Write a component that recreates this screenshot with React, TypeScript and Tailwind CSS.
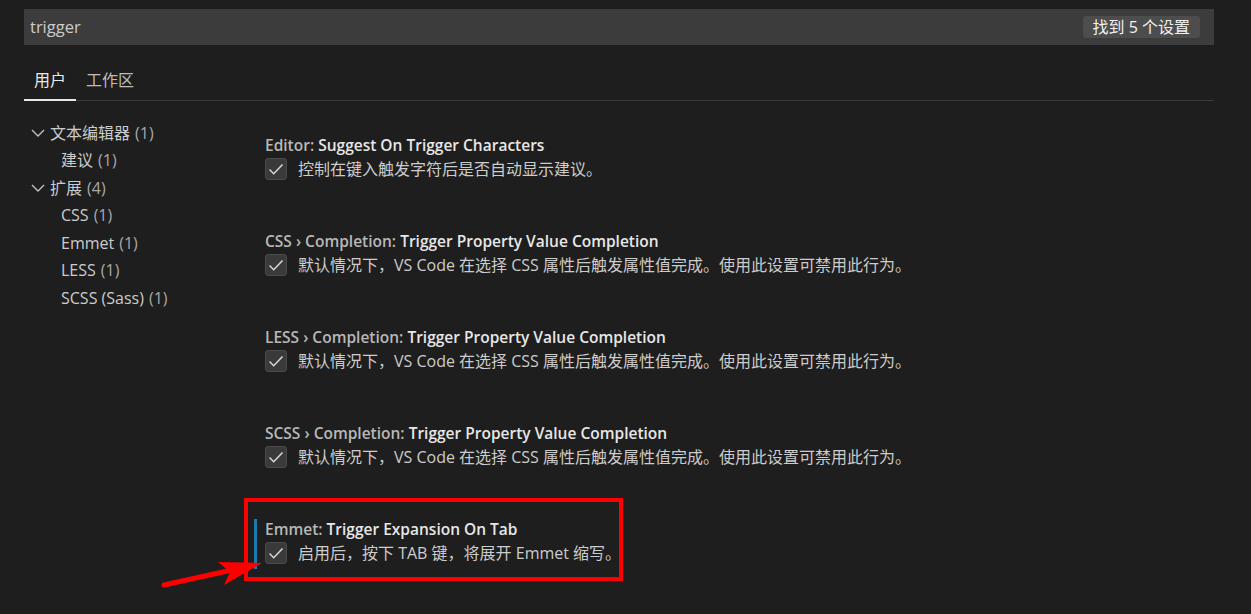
import { ReactNode } from 'react'

const FONT = { fontFamily: '"Open Sans", "Noto Sans CJK SC", sans-serif' }

type Setting = { prefix: string; name: string; desc: string; focused?: boolean }

const SETTINGS: Setting[] = [
  { prefix: 'Editor: ', name: 'Suggest On Trigger Characters', desc: '控制在键入触发字符后是否自动显示建议。' },
  {
    prefix: 'CSS › Completion: ',
    name: 'Trigger Property Value Completion',
    desc: '默认情况下，VS Code 在选择 CSS 属性后触发属性值完成。使用此设置可禁用此行为。',
  },
  {
    prefix: 'LESS › Completion: ',
    name: 'Trigger Property Value Completion',
    desc: '默认情况下，VS Code 在选择 CSS 属性后触发属性值完成。使用此设置可禁用此行为。',
  },
  {
    prefix: 'SCSS › Completion: ',
    name: 'Trigger Property Value Completion',
    desc: '默认情况下，VS Code 在选择 CSS 属性后触发属性值完成。使用此设置可禁用此行为。',
  },
  { prefix: 'Emmet: ', name: 'Trigger Expansion On Tab', desc: '启用后，按下 TAB 键，将展开 Emmet 缩写。', focused: true },
]

function Chevron() {
  return (
    <svg width="14" height="8" viewBox="0 0 14 8" fill="none" aria-hidden="true">
      <path d="M1 1l6 6 6-6" stroke="#c5c5c5" strokeWidth="1.3" />
    </svg>
  )
}

function TreeRow({ children, indent, open }: { children: ReactNode; indent?: boolean; open?: boolean }) {
  return (
    <div className={`flex h-[27.5px] items-center ${indent ? 'pl-[37px]' : 'pl-[7px]'}`}>
      {open && (
        <span className="mr-[5px] flex w-[14px] items-center">
          <Chevron />
        </span>
      )}
      {children}
    </div>
  )
}

function Count({ n }: { n: number }) {
  return <span className="ml-[5px] text-[#a8a8a8]">({n})</span>
}

function Checkbox() {
  return (
    <span className="flex h-[22px] w-[22px] shrink-0 items-center justify-center rounded-[3px] border border-[#4a4a4a] bg-[#3a3a3a]">
      <svg width="18" height="18" viewBox="0 0 18 18" fill="none" aria-hidden="true">
        <path d="M2.5 9.5l4.2 4.2L15.5 4.5" stroke="#d8d8d8" strokeWidth="1.5" />
      </svg>
    </span>
  )
}

function SettingItem({ s }: { s: Setting }) {
  return (
    <div className={`border-l-[3px] pb-[5px] pl-[8px] ${s.focused ? 'border-[#1a7bb0]' : 'border-transparent'}`}>
      <div className="h-5 text-[15.5px] leading-5 font-semibold whitespace-nowrap">
        <span className="text-[#b8b8b8]">{s.prefix}</span>
        <span className="text-[#e7e7e7]">{s.name}</span>
      </div>
      <div className="mt-[3px] flex h-[22px] items-center gap-[11px]">
        <Checkbox />
        <span className="whitespace-nowrap text-[#cccccc]">{s.desc}</span>
      </div>
    </div>
  )
}

export default function App() {
  return (
    <div className="relative h-[614px] w-[1251px] overflow-hidden bg-[#1e1e1e] text-[16px] text-[#cccccc]" style={FONT}>
      <div className="ml-[24px] w-[1190px] pt-[9px]">
        <div className="flex h-[36px] items-center justify-between bg-[#3c3c3c] pl-[6px] pr-[14px]">
          <span className="text-[16.5px] text-[#cccccc]">trigger</span>
          <span className="flex h-[22px] items-center rounded-[3px] bg-[#4d4d4d] px-[10px] text-[16px] text-[#f0f0f0]">
            找到 5 个设置
          </span>
        </div>

        <div className="mt-[24px] flex border-b border-[#3a3a3a]">
          <div className="-mb-px border-b-2 border-[#e8e8e8] px-[10px] pb-[8px] leading-[22px] text-[#e8e8e8]">用户</div>
          <div className="px-[10px] pb-[8px] leading-[22px] text-[#bdbdbd]">工作区</div>
        </div>

        <div className="mt-[18px] flex">
          <div className="w-[230px] shrink-0">
            <TreeRow open>
              文本编辑器
              <Count n={1} />
            </TreeRow>
            <TreeRow indent>
              建议
              <Count n={1} />
            </TreeRow>
            <TreeRow open>
              扩展
              <Count n={4} />
            </TreeRow>
            <TreeRow indent>
              CSS
              <Count n={1} />
            </TreeRow>
            <TreeRow indent>
              Emmet
              <Count n={1} />
            </TreeRow>
            <TreeRow indent>
              LESS
              <Count n={1} />
            </TreeRow>
            <TreeRow indent>
              SCSS (Sass)
              <Count n={1} />
            </TreeRow>
          </div>

          <div className="flex flex-col gap-[46px] pt-[16px]">
            {SETTINGS.map((s) => (
              <SettingItem key={s.prefix} s={s} />
            ))}
          </div>
        </div>
      </div>

      {/* annotation: red highlight box and arrow */}
      <div className="pointer-events-none absolute left-[244px] top-[498px] h-[83px] w-[379px] border-4 border-[#ff0000]" />
      <svg
        className="pointer-events-none absolute left-0 top-0"
        width="1251"
        height="614"
        viewBox="0 0 1251 614"
        aria-hidden="true"
      >
        <line x1="164" y1="585" x2="232" y2="570" stroke="#ff0000" strokeWidth="5" strokeLinecap="round" />
        <polygon points="218,562 262,563 224,585 230,572" fill="#ff0000" />
      </svg>
    </div>
  )
}
